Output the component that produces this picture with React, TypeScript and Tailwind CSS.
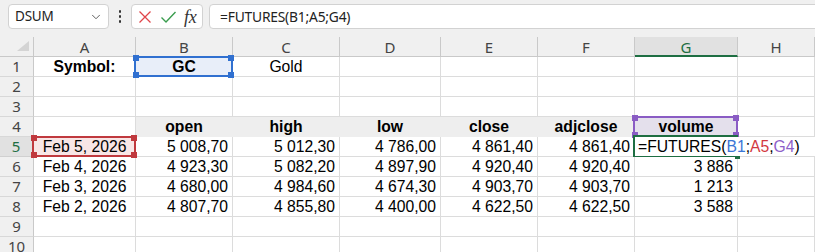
import React from "react";
import { ChevronDown } from "lucide-react";

type Cell = {
  t?: string;
  b?: boolean;
  align?: "c" | "r" | "l";
  fill?: string;
  sel?: "blue" | "red" | "purple" | "green";
  formula?: boolean;
};

const widths = ["w-[102px]", "w-[97px]", "w-[107px]", "w-[101px]", "w-[97px]", "w-[97px]", "w-[103px]"];
const letters = ["A", "B", "C", "D", "E", "F", "G", "H"];

const num = (t: string): Cell => ({ t, align: "r" });
const date = (t: string): Cell => ({ t, align: "c" });
const hd = (t: string): Cell => ({ t, b: true, align: "c", fill: "gray" });

const rows: Cell[][] = [
  [{ t: "Symbol:", b: true, align: "c" }, { t: "GC", b: true, align: "c", fill: "blue", sel: "blue" }, { t: "Gold", align: "c" }, {}, {}, {}, {}, {}],
  [{}, {}, {}, {}, {}, {}, {}, {}],
  [{}, {}, {}, {}, {}, {}, {}, {}],
  [{}, hd("open"), hd("high"), hd("low"), hd("close"), hd("adjclose"), { t: "volume", b: true, align: "c", fill: "purple", sel: "purple" }, {}],
  [
    { t: "Feb 5, 2026", align: "c", fill: "red", sel: "red" },
    num("5 008,70"),
    num("5 012,30"),
    num("4 786,00"),
    num("4 861,40"),
    num("4 861,40"),
    { formula: true, sel: "green" },
    { t: "__skip" },
  ],
  [date("Feb 4, 2026"), num("4 923,30"), num("5 082,20"), num("4 897,90"), num("4 920,40"), num("4 920,40"), num("3 886"), {}],
  [date("Feb 3, 2026"), num("4 680,00"), num("4 984,60"), num("4 674,30"), num("4 903,70"), num("4 903,70"), num("1 213"), {}],
  [date("Feb 2, 2026"), num("4 807,70"), num("4 855,80"), num("4 400,00"), num("4 622,50"), num("4 622,50"), num("3 588"), {}],
  [{}, {}, {}, {}, {}, {}, {}, {}],
  [{}, {}, {}, {}, {}, {}, {}, {}],
];

function Handle({ pos, color }: { pos: string; color: string }) {
  return <div className={`absolute w-[6px] h-[6px] ${pos} ${color}`} />;
}

function Selection({ kind }: { kind: "blue" | "red" | "purple" | "green" }) {
  if (kind === "green") {
    return (
      <div className="absolute left-[-2px] top-[-2px] right-[-1px] bottom-[-1px] border-2 border-[#1e6e42] z-20 pointer-events-none">
        <div className="absolute right-[-4px] bottom-[-4px] w-[5px] h-[5px] bg-[#1e6e42]" />
      </div>
    );
  }
  const border =
    kind === "blue" ? "border-[#3070d0]" : kind === "red" ? "border-[#c0393e]" : "border-[#8a5cc4]";
  const bg = kind === "blue" ? "bg-[#3070d0]" : kind === "red" ? "bg-[#c0393e]" : "bg-[#8a5cc4]";
  return (
    <div className={`absolute left-[-2px] top-[-1px] right-[-1px] bottom-[-1px] border-2 ${border} z-10 pointer-events-none`}>
      <Handle pos="left-[-3px] top-[-3px]" color={bg} />
      <Handle pos="right-[-3px] top-[-3px]" color={bg} />
      <Handle pos="left-[-3px] bottom-[-3px]" color={bg} />
      <Handle pos="right-[-3px] bottom-[-3px]" color={bg} />
    </div>
  );
}

function fillClass(fill?: string) {
  switch (fill) {
    case "gray":
      return "bg-[#eeeeee] border-[#eeeeee]";
    case "blue":
      return "bg-[#e8eef9] border-[#e8eef9]";
    case "red":
      return "bg-[#f8e6e6] border-[#f8e6e6]";
    case "purple":
      return "bg-[#e4e0ec] border-[#e4e0ec]";
    default:
      return "border-[#dcdcdc]";
  }
}

function DataCell({ c, wi }: { c: Cell; wi: number }) {
  const w = wi < 7 ? widths[wi] : "flex-1";
  const align = c.align === "r" ? "justify-end pr-[4px]" : c.align === "c" ? "justify-center" : "justify-start pl-[3px]";
  return (
    <div className={`relative ${w} shrink-0 h-[20px] border-r border-b ${fillClass(c.fill)} flex items-center ${align}`}>
      {c.sel && <Selection kind={c.sel} />}
      {c.formula ? (
        <span className="absolute left-0 top-0 h-[19px] pl-[3px] pr-[3px] leading-[20px] whitespace-nowrap z-30 bg-white">
          =FUTURES(<span className="text-[#3a76d6]">B1</span>;<span className="text-[#d2393f]">A5</span>;<span className="text-[#8e5fc9]">G4</span>)
        </span>
      ) : c.t && c.t !== "__skip" ? (
        <span className={`whitespace-nowrap leading-[20px] ${c.b ? "font-bold" : ""}`}>{c.t}</span>
      ) : null}
    </div>
  );
}

export default function App() {
  return (
    <div className="w-[815px] h-[252px] overflow-hidden bg-[#f0f0f0] relative">
      {/* Formula toolbar */}
      <div className="h-[37px] flex items-start pt-[4px] pl-[8px] font-['Noto_Sans','Open_Sans',sans-serif] text-[#222]">
        <div className="w-[101px] h-[25px] shrink-0 rounded-[4px] border border-[#d2d2d2] bg-white flex items-center justify-between pl-[6px] pr-[5px]">
          <span className="text-[13.5px] leading-none tracking-[-0.2px]">DSUM</span>
          <ChevronDown size={14} strokeWidth={1.6} className="text-[#555]" />
        </div>
        <div className="w-[22px] h-[25px] shrink-0 flex flex-col items-center justify-center gap-[2.5px]">
          <div className="w-[2.5px] h-[2.5px] rounded-full bg-[#333]" />
          <div className="w-[2.5px] h-[2.5px] rounded-full bg-[#333]" />
          <div className="w-[2.5px] h-[2.5px] rounded-full bg-[#333]" />
        </div>
        <div className="w-[72px] h-[25px] shrink-0 rounded-[4px] border border-[#d2d2d2] bg-white flex items-center pl-[5px]">
          <svg width="14" height="14" viewBox="0 0 14 14" className="ml-[1px]">
            <path d="M1.5 1.5 L12.5 12.5 M12.5 1.5 L1.5 12.5" stroke="#e0454a" strokeWidth="1.3" fill="none" />
          </svg>
          <svg width="17" height="14" viewBox="0 0 17 14" className="ml-[8px]">
            <path d="M1.5 7.5 L6 12 L15.5 2" stroke="#3a9d4e" strokeWidth="1.4" fill="none" />
          </svg>
          <span className="ml-[7px] font-['Liberation_Serif',serif] italic text-[18px] leading-none text-[#333] tracking-[-0.3px]">fx</span>
        </div>
        <div className="ml-[6px] w-[620px] h-[25px] shrink-0 rounded-l-[4px] border border-[#d2d2d2] bg-white flex items-center pl-[10px]">
          <span className="text-[13.8px] leading-none tracking-[-0.2px]">=FUTURES(B1;A5;G4)</span>
        </div>
      </div>

      {/* Column headers */}
      <div className="flex h-[20px] font-['Noto_Sans','Open_Sans',sans-serif] text-[15px] text-[#444]">
        <div className="relative w-[34px] shrink-0 h-[20px] border-r border-b border-[#c9c9c9]">
          <svg width="14" height="11" viewBox="0 0 14 11" className="absolute right-[3px] bottom-[4px]">
            <path d="M13 0 L13 10 L1 10 Z" fill="#d4d4d4" />
          </svg>
        </div>
        {letters.map((l, i) => (
          <div
            key={l}
            className={`relative ${i < 7 ? widths[i] : "flex-1"} shrink-0 h-[20px] border-r border-b flex items-center justify-center pt-[2px] ${
              l === "G" ? "bg-[#e1e1e1] border-r-[#c9c9c9] border-b-[#1e6e42] border-b-2 text-[#1e6e42]" : "border-[#c9c9c9]"
            }`}
          >
            {l}
          </div>
        ))}
      </div>

      {/* Rows */}
      <div className="bg-white">
        {rows.map((r, ri) => (
          <div key={ri} className="flex h-[20px]">
            <div
              className={`w-[34px] shrink-0 h-[20px] border-b flex items-center justify-center font-['Noto_Sans','Open_Sans',sans-serif] text-[15px] ${
                ri === 4
                  ? "bg-[#e1e1e1] text-[#1e6e42] border-r-2 border-r-[#1e6e42] border-b-[#d0d0d0]"
                  : "bg-[#f0f0f0] text-[#444] border-r border-[#c9c9c9] border-b-[#d8d8d8]"
              }`}
            >
              {ri + 1}
            </div>
            <div className="flex flex-1 font-['Liberation_Sans',Arial,sans-serif] text-[15.7px] text-black">
              {r.map((c, ci) =>
                ci === 7 && ri === 4 ? (
                  <div key={ci} className="flex-1 h-[20px] border-b border-[#dcdcdc]" />
                ) : (
                  <DataCell key={ci} c={c} wi={ci} />
                )
              )}
            </div>
          </div>
        ))}
      </div>
    </div>
  );
}
